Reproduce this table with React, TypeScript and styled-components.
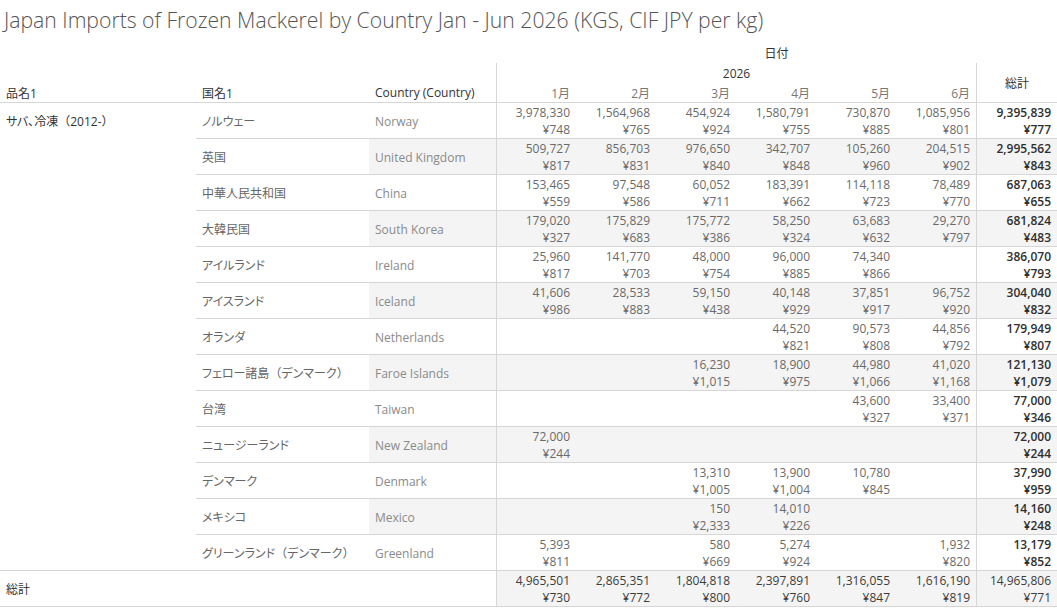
import React from "react";
import styled, { createGlobalStyle } from "styled-components";

const GlobalStyle = createGlobalStyle`
  html, body { margin: 0; padding: 0; background: #ffffff; }
  body {
    font-family: "Open Sans", "Noto Sans CJK JP", sans-serif;
    -webkit-font-smoothing: antialiased;
  }
`;

const COLS = "196px 173px 127px repeat(6, 80px) 81px";
const LINE = "#d6d6d6";
const SHADE = "#f4f4f4";
const JP = `"Open Sans", "Noto Sans CJK JP", sans-serif`;

const Page = styled.div`
  width: 1057px;
  height: 608px;
  overflow: hidden;
`;

const Title = styled.h1`
  margin: 0;
  height: 43px;
  padding: 6px 0 0 4px;
  box-sizing: border-box;
  font-family: "Open Sans", sans-serif;
  font-weight: 300;
  font-size: 21.2px;
  line-height: 28px;
  color: #555555;
  white-space: nowrap;
`;

const HeaderGrid = styled.div`
  display: grid;
  grid-template-columns: ${COLS};
  grid-template-rows: repeat(3, 20px);
`;

const HeadCell = styled.div<{ $col: string; $row: string; $align?: string; $left?: boolean; $bottom?: boolean; $muted?: boolean }>`
  grid-column: ${(p) => p.$col};
  grid-row: ${(p) => p.$row};
  display: flex;
  align-items: center;
  justify-content: ${(p) => p.$align || "flex-start"};
  box-sizing: border-box;
  padding: 0 6px;
  font-family: ${JP};
  font-feature-settings: "palt";
  font-size: 12px;
  color: ${(p) => (p.$muted ? "#777777" : "#333333")};
  border-left: ${(p) => (p.$left ? `1px solid ${LINE}` : "none")};
  border-bottom: ${(p) => (p.$bottom ? `1px solid ${LINE}` : "none")};
  white-space: nowrap;
`;

const BodyGrid = styled.div`
  display: grid;
  grid-template-columns: ${COLS};
  grid-auto-rows: 36px;
`;

const ProductCell = styled.div`
  grid-column: 1;
  grid-row: 1 / span 13;
  box-sizing: border-box;
  padding: 1px 6px 0;
  line-height: 35px;
  font-family: ${JP};
  font-feature-settings: "palt";
  font-size: 12px;
  color: #333333;
  border-bottom: 1px solid ${LINE};
  white-space: nowrap;
`;

const TotalLabel = styled.div`
  grid-column: span 3;
  box-sizing: border-box;
  padding: 1px 6px 0;
  display: flex;
  align-items: center;
  font-family: ${JP};
  font-size: 12px;
  color: #333333;
  border-bottom: 1px solid ${LINE};
`;

const TextCell = styled.div<{ $shade?: boolean; $light?: boolean }>`
  box-sizing: border-box;
  padding: 1px 6px 0;
  display: flex;
  align-items: center;
  font-family: ${JP};
  font-feature-settings: "palt";
  font-size: 12px;
  color: ${(p) => (p.$light ? "#8a8a8a" : "#666666")};
  background: ${(p) => (p.$shade ? SHADE : "transparent")};
  border-bottom: 1px solid ${LINE};
  white-space: nowrap;
`;

const Paren = styled.span`
  font-feature-settings: normal;
`;

const ValueCell = styled.div<{ $shade?: boolean; $left?: boolean; $tone?: "data" | "total" | "grand" }>`
  box-sizing: border-box;
  padding: 1px 6px 0 0;
  display: flex;
  flex-direction: column;
  justify-content: center;
  align-items: flex-end;
  font-family: "Open Sans", sans-serif;
  font-size: 12px;
  line-height: 17px;
  font-weight: ${(p) => (p.$tone === "total" ? 600 : 400)};
  color: ${(p) => (p.$tone === "data" ? "#6a6a6a" : p.$tone === "total" ? "#2f2f2f" : "#3c3c3c")};
  background: ${(p) => (p.$shade ? SHADE : "transparent")};
  border-left: ${(p) => (p.$left ? `1px solid ${LINE}` : "none")};
  border-bottom: 1px solid ${LINE};
  white-space: nowrap;
`;

type Pair = [number, number] | null;
type Row = { jp: string; en: string; months: Pair[]; total: [number, number] };

const rows: Row[] = [
  { jp: "ノルウェー", en: "Norway", months: [[3978330, 748], [1564968, 765], [454924, 924], [1580791, 755], [730870, 885], [1085956, 801]], total: [9395839, 777] },
  { jp: "英国", en: "United Kingdom", months: [[509727, 817], [856703, 831], [976650, 840], [342707, 848], [105260, 960], [204515, 902]], total: [2995562, 843] },
  { jp: "中華人民共和国", en: "China", months: [[153465, 559], [97548, 586], [60052, 711], [183391, 662], [114118, 723], [78489, 770]], total: [687063, 655] },
  { jp: "大韓民国", en: "South Korea", months: [[179020, 327], [175829, 683], [175772, 386], [58250, 324], [63683, 632], [29270, 797]], total: [681824, 483] },
  { jp: "アイルランド", en: "Ireland", months: [[25960, 817], [141770, 703], [48000, 754], [96000, 885], [74340, 866], null], total: [386070, 793] },
  { jp: "アイスランド", en: "Iceland", months: [[41606, 986], [28533, 883], [59150, 438], [40148, 929], [37851, 917], [96752, 920]], total: [304040, 832] },
  { jp: "オランダ", en: "Netherlands", months: [null, null, null, [44520, 821], [90573, 808], [44856, 792]], total: [179949, 807] },
  { jp: "フェロー諸島（デンマーク）", en: "Faroe Islands", months: [null, null, [16230, 1015], [18900, 975], [44980, 1066], [41020, 1168]], total: [121130, 1079] },
  { jp: "台湾", en: "Taiwan", months: [null, null, null, null, [43600, 327], [33400, 371]], total: [77000, 346] },
  { jp: "ニュージーランド", en: "New Zealand", months: [[72000, 244], null, null, null, null, null], total: [72000, 244] },
  { jp: "デンマーク", en: "Denmark", months: [null, null, [13310, 1005], [13900, 1004], [10780, 845], null], total: [37990, 959] },
  { jp: "メキシコ", en: "Mexico", months: [null, null, [150, 2333], [14010, 226], null, null], total: [14160, 248] },
  { jp: "グリーンランド（デンマーク）", en: "Greenland", months: [[5393, 811], null, [580, 669], [5274, 924], null, [1932, 820]], total: [13179, 852] },
];

const colTotals: [number, number][] = [
  [4965501, 730], [2865351, 772], [1804818, 800], [2397891, 760], [1316055, 847], [1616190, 819],
];
const grandTotal: [number, number] = [14965806, 771];

const fmt = (n: number) => n.toString().replace(/\B(?=(\d{3})+(?!\d))/g, ",");

const JpText: React.FC<{ text: string }> = ({ text }) => {
  const parts = text.split(/([（）])/);
  return (
    <span>
      {parts.map((p, i) => (p === "（" || p === "）" ? <Paren key={i}>{p}</Paren> : <React.Fragment key={i}>{p}</React.Fragment>))}
    </span>
  );
};

const Values: React.FC<{ v: Pair }> = ({ v }) =>
  v ? (
    <>
      <span>{fmt(v[0])}</span>
      <span>¥{fmt(v[1])}</span>
    </>
  ) : null;

const months = ["1月", "2月", "3月", "4月", "5月", "6月"];

export default function App() {
  return (
    <Page>
      <GlobalStyle />
      <Title>Japan Imports of Frozen Mackerel by Country Jan - Jun 2026 (KGS, CIF JPY per kg)</Title>
      <HeaderGrid>
        <HeadCell $col="4 / 11" $row="1" $align="center">日付</HeadCell>
        <HeadCell $col="4 / 10" $row="2" $align="center" $left>2026</HeadCell>
        <HeadCell $col="10" $row="2 / 4" $align="center" $left $bottom>総計</HeadCell>
        <HeadCell $col="1" $row="3" $bottom>品名1</HeadCell>
        <HeadCell $col="2" $row="3" $bottom>国名1</HeadCell>
        <HeadCell $col="3" $row="3" $bottom>Country (Country)</HeadCell>
        {months.map((m, i) => (
          <HeadCell key={m} $col={String(4 + i)} $row="3" $align="flex-end" $left={i === 0} $bottom $muted>
            {m}
          </HeadCell>
        ))}
      </HeaderGrid>
      <BodyGrid>
        <ProductCell>
          <JpText text="サバ、冷凍（2012-）" />
        </ProductCell>
        {rows.map((r, ri) => {
          const shade = ri % 2 === 1;
          return (
            <React.Fragment key={r.en}>
              <TextCell>
                <JpText text={r.jp} />
              </TextCell>
              <TextCell $shade={shade} $light>{r.en}</TextCell>
              {r.months.map((v, mi) => (
                <ValueCell key={mi} $shade={shade} $left={mi === 0} $tone="data">
                  <Values v={v} />
                </ValueCell>
              ))}
              <ValueCell $shade={shade} $left $tone="total">
                <Values v={r.total} />
              </ValueCell>
            </React.Fragment>
          );
        })}
        <TotalLabel>総計</TotalLabel>
        {colTotals.map((v, mi) => (
          <ValueCell key={mi} $shade $left={mi === 0} $tone="grand">
            <Values v={v} />
          </ValueCell>
        ))}
        <ValueCell $shade $left $tone="grand">
          <Values v={grandTotal} />
        </ValueCell>
      </BodyGrid>
    </Page>
  );
}
